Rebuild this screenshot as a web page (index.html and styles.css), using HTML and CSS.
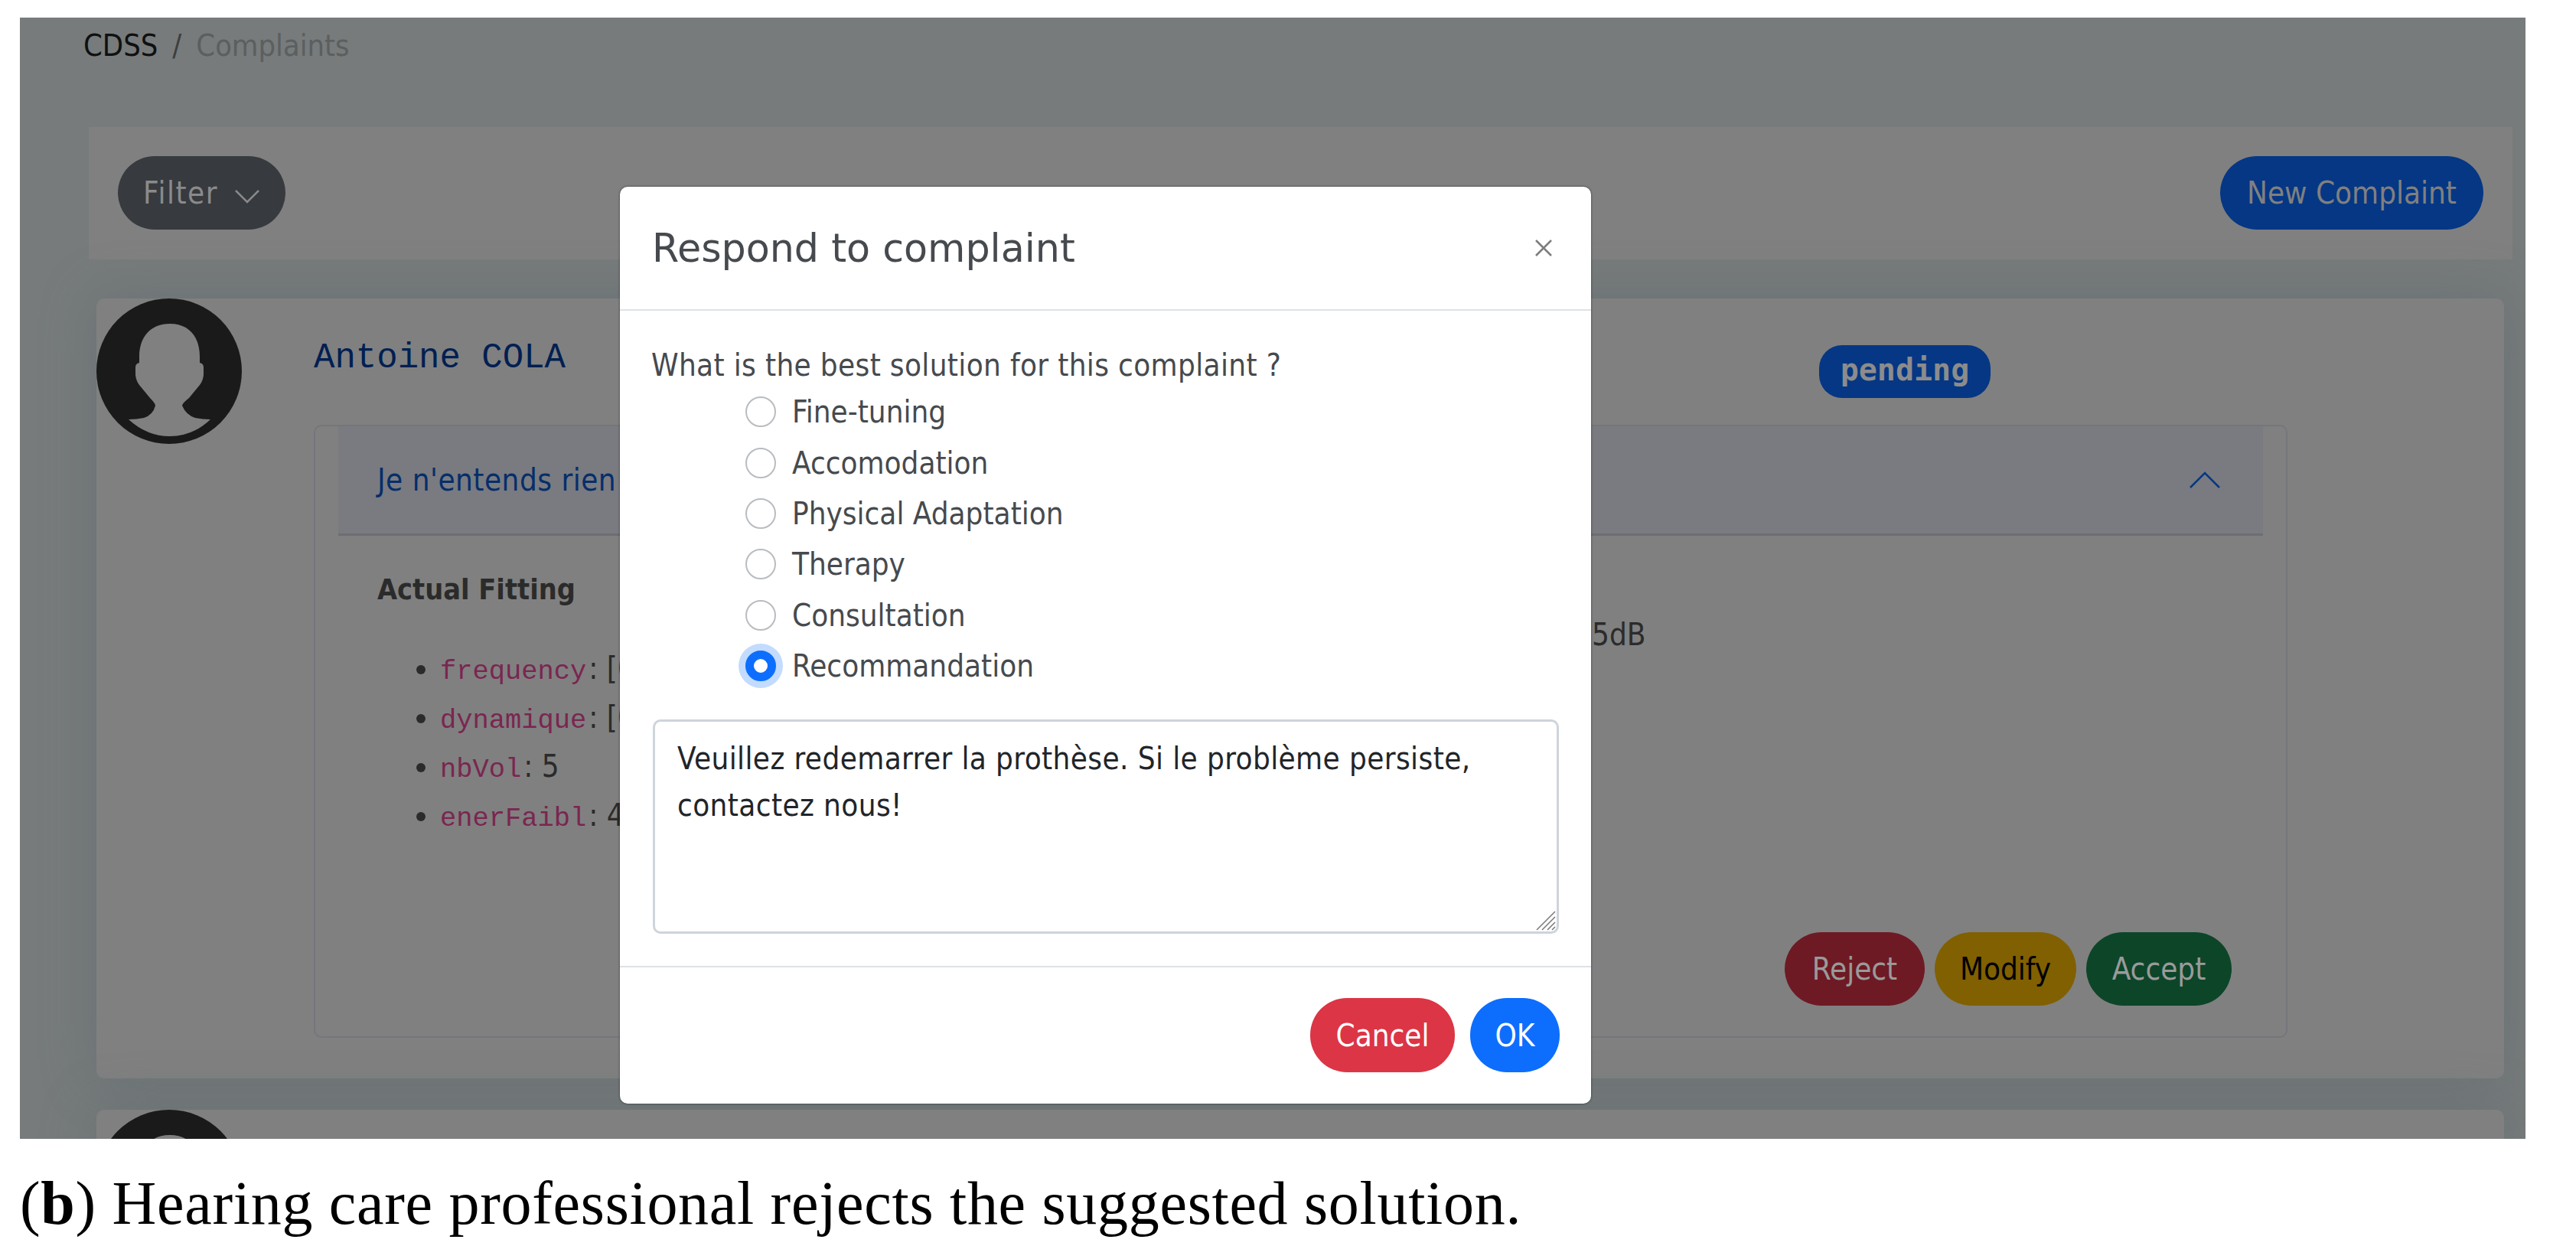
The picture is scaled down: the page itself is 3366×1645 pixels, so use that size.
FILE: index.html
```html
<!DOCTYPE html>
<html lang="en">
<head>
    <meta charset="UTF-8">
    <title>Complaints</title>
    <link rel="stylesheet" href="styles.css">
</head>
<body>
    <div class="shot">
        <nav class="crumbs"><span class="crumb-root">CDSS</span><span class="crumb-sep">/</span><span class="crumb-here">Complaints</span></nav>

        <div class="toolbar">
            <button class="btn btn-filter">Filter
                <svg class="chev-down" viewBox="0 0 34 20"><path d="M2 3 L17 18 L32 3"/></svg>
            </button>
            <button class="btn btn-new">New Complaint</button>
        </div>

        <div class="card">
            <svg class="avatar" viewBox="0 0 190 190">
                <circle cx="95" cy="95" r="95" fill="#1a1a1a"/>
                <path fill="#808080" d="M96 33C71 33 56 50 56 76L56 84Q51 85 51 90L51 100Q52 108 56 113L70 130Q77 137 77 140Q74 152 62 156Q52 158 42 158Q66 180 96 180Q126 180 149 158Q139 158 129 156Q117 152 112 140Q112 137 121 130L135 113Q139 108 140 100L140 90Q140 85 135 84L135 76C135 50 121 33 96 33Z"/>
            </svg>
            <div class="card-main">
                <div class="card-head">
                    <span class="patient">Antoine COLA</span>
                    <span class="status">pending</span>
                </div>
                <div class="complaint">
                    <div class="acc-head">
                        <span class="acc-title">Je n'entends rien</span>
                        <svg class="chev-up" viewBox="0 0 40 22"><path d="M1 21 L20 2 L39 21"/></svg>
                    </div>
                    <div class="acc-body">
                        <div class="fitting">
                            <h4>Actual Fitting</h4>
                            <ul>
                                <li><code>frequency</code>: [0]</li>
                                <li><code>dynamique</code>: [0]</li>
                                <li><code>nbVol</code>: 5</li>
                                <li><code>enerFaibl</code>: 4</li>
                            </ul>
                        </div>
                        <p class="suggestion">5dB</p>
                    </div>
                    <div class="actions">
                        <button class="btn btn-reject">Reject</button>
                        <button class="btn btn-modify">Modify</button>
                        <button class="btn btn-accept">Accept</button>
                    </div>
                </div>
            </div>
        </div>

        <div class="card card-next">
            <svg class="avatar" viewBox="0 0 190 190">
                <circle cx="95" cy="95" r="95" fill="#1a1a1a"/>
                <path fill="#808080" d="M96 33C71 33 56 50 56 76L56 84Q51 85 51 90L51 100Q52 108 56 113L70 130Q77 137 77 140L112 140Q112 137 121 130L135 113Q139 108 140 100L140 90Q140 85 135 84L135 76C135 50 121 33 96 33Z"/>
            </svg>
        </div>

        <div class="modal">
            <div class="modal-head">
                <h5>Respond to complaint</h5>
                <svg class="close" viewBox="0 0 24 22"><path d="M2 1 L22 21 M22 1 L2 21"/></svg>
            </div>
            <div class="modal-body">
                <p class="question">What is the best solution for this complaint ?</p>
                <div class="options">
                    <label class="option"><span class="radio"></span>Fine-tuning</label>
                    <label class="option"><span class="radio"></span>Accomodation</label>
                    <label class="option"><span class="radio"></span>Physical Adaptation</label>
                    <label class="option"><span class="radio"></span>Therapy</label>
                    <label class="option"><span class="radio"></span>Consultation</label>
                    <label class="option"><span class="radio radio-on"></span>Recommandation</label>
                </div>
                <div class="answer">Veuillez redemarrer la prothèse. Si le problème persiste, contactez nous!
                    <svg class="grip" viewBox="0 0 26 26"><path d="M25 1 L1 25 M25 8 L8 25 M25 15 L15 25 M25 21 L21 25"/></svg>
                </div>
            </div>
            <div class="modal-foot">
                <button class="btn btn-cancel">Cancel</button>
                <button class="btn btn-ok">OK</button>
            </div>
        </div>
    </div>
    <p class="caption">(<b>b</b>) Hearing care professional rejects the suggested solution.</p>
</body>
</html>
```

FILE: styles.css
```css
html, body {
    margin: 0;
    background: #ffffff;
}
body {
    width: 3366px;
    height: 1645px;
    overflow: hidden;
    padding: 23px 66px 0 26px;
    box-sizing: border-box;
    font-family: "DejaVu Sans", sans-serif;
    font-stretch: condensed;
    font-size: 40px;
}
.shot {
    position: relative;
    height: 1465px;
    overflow: hidden;
    background: #777b7b;
    padding: 18px 17px 0 83px;
    color: #2b2b2b;
    box-sizing: border-box;
}
.crumbs {
    height: 36px;
    line-height: 36px;
    display: flex;
    align-items: center;
    gap: 19px;
    margin-bottom: 89px;
    font-size: 39.5px;
}
.crumb-root { color: #101010; }
.crumb-sep { color: #3c3f40; }
.crumb-here { color: #5b5f60; }

.toolbar {
    margin-left: 7px;
    height: 173px;
    padding: 38px 38px 0;
    box-sizing: border-box;
    background: #808080;
    display: flex;
    justify-content: space-between;
    align-items: flex-start;
}
.btn {
    border: none;
    border-radius: 48px;
    height: 96px;
    font-family: inherit;
    font-stretch: inherit;
    font-size: 40px;
    color: #808080;
    padding: 0;
}
.btn-filter {
    width: 219px;
    background: #373a3f;
    color: #8a8a8a;
    letter-spacing: 1.5px;
}
.chev-down {
    width: 34px;
    height: 20px;
    margin-left: 8px;
    fill: none;
    stroke: #8a8a8a;
    stroke-width: 2.5;
}
.btn-new {
    width: 344px;
    background: #053784;
}

.card {
    margin: 51px 11px 0 17px;
    height: 1019px;
    background: #808080;
    border-radius: 10px;
    display: flex;
    box-shadow: 0 0 70px rgba(90, 105, 110, 0.45);
}
.avatar {
    width: 190px;
    height: 190px;
    flex: none;
}
.card-main {
    margin-left: 94px;
    width: 2579px;
}
.card-head {
    height: 165px;
    position: relative;
}
.patient {
    position: absolute;
    left: 0;
    top: 53px;
    font-family: "Liberation Mono", monospace;
    font-stretch: normal;
    font-size: 45.7px;
    line-height: 50px;
    color: #001f52;
}
.status {
    position: absolute;
    left: 1967px;
    top: 61px;
    width: 224px;
    height: 69px;
    line-height: 64px;
    text-align: center;
    border-radius: 30px;
    background: #053784;
    color: #8c8c8c;
    font-family: "DejaVu Sans Mono", monospace;
    font-stretch: normal;
    font-weight: bold;
    font-size: 40px;
}
.complaint {
    height: 801px;
    border: 2px solid #75767c;
    border-radius: 10px;
    box-sizing: border-box;
    padding: 0 30px;
    position: relative;
}
.acc-head {
    height: 143px;
    box-sizing: border-box;
    background: #797b80;
    border-bottom: 3px solid #6c6e74;
    padding: 0 56px 0 51px;
    display: flex;
    align-items: center;
    justify-content: space-between;
    color: #062e6b;
}
.acc-title {
    letter-spacing: 0.5px;
}
.chev-up {
    width: 40px;
    height: 22px;
    fill: none;
    stroke: #053784;
    stroke-width: 2.5;
}
.acc-body {
    padding: 48px 0 0 51px;
    display: flex;
}
.fitting {
    width: 1300px;
}
.fitting h4 {
    margin: 0 0 49px;
    font-size: 37.5px;
    line-height: 44px;
    font-weight: bold;
}
.fitting ul {
    margin: 0;
    padding: 0 0 0 82px;
}
.fitting li {
    height: 64px;
    line-height: 64px;
}
code {
    font-family: "Liberation Mono", monospace;
    font-stretch: normal;
    font-size: 35.4px;
    color: #7a2650;
    margin-right: 3px;
}
.suggestion {
    margin: 58px 0 0 287px;
}
.actions {
    position: absolute;
    right: 71px;
    bottom: 40px;
    display: flex;
    gap: 13px;
}
.btn-reject { width: 183px; background: #6e1a24; color: #9a9a9a; }
.btn-modify { width: 185px; background: #806000; color: #000000; }
.btn-accept { width: 190px; background: #0d4529; color: #9a9a9a; }

.card-next {
    margin-top: 41px;
    height: 200px;
}

/* sits over the dimmed page */
.modal {
    position: absolute;
    left: 784px;
    top: 221px;
    width: 1269px;
    height: 1198px;
    background: #ffffff;
    border-radius: 10px;
    box-shadow: 0 0 3px rgba(0, 0, 0, 0.6);
    color: #464a4e;
    overflow: hidden;
}
.modal-head {
    height: 160px;
    border-bottom: 2px solid #dee2e6;
    display: flex;
    align-items: center;
    justify-content: space-between;
    padding: 0 50px 0 42px;
}
.modal-head h5 {
    margin: 0;
    font-weight: normal;
    font-stretch: normal;
    font-size: 50.7px;
}
.close {
    width: 24px;
    height: 22px;
    fill: none;
    stroke: #7d7d7d;
    stroke-width: 2.5;
}
.modal-body {
    height: 858px;
    border-bottom: 2px solid #dee2e6;
    padding: 0 41px;
    box-sizing: border-box;
}
.question {
    margin: 0;
    height: 99px;
    padding-top: 48px;
    line-height: 46px;
    box-sizing: border-box;
    letter-spacing: 0.35px;
}
.options {
    padding-left: 123px;
    margin-bottom: 37px;
}
.option {
    height: 66.4px;
    display: flex;
    align-items: center;
    gap: 21px;
}
.radio {
    width: 40px;
    height: 40px;
    box-sizing: border-box;
    border: 2px solid #b9bcc0;
    border-radius: 50%;
    background: #ffffff;
}
.radio-on {
    border: 11px solid #0d6efd;
    box-shadow: 0 0 0 9px #c2dbfe;
}
.answer {
    position: relative;
    margin-left: 2px;
    width: 1184px;
    height: 280px;
    box-sizing: border-box;
    border: 3px solid #ced4da;
    border-radius: 10px;
    padding: 18px 100px 0 29px;
    line-height: 61px;
    letter-spacing: 0.4px;
    color: #212529;
    background: #ffffff;
}
.grip {
    position: absolute;
    right: 1px;
    bottom: 1px;
    width: 26px;
    height: 26px;
    fill: none;
    stroke: #777777;
    stroke-width: 1.5;
}
.modal-foot {
    display: flex;
    justify-content: flex-end;
    gap: 20px;
    padding: 40px 41px 0 0;
}
.btn-cancel { width: 189px; height: 97px; background: #dc3545; color: #ffffff; }
.btn-ok { width: 117px; height: 97px; background: #0d6efd; color: #ffffff; }

.caption {
    margin: 42px 0 0;
    font-family: "Liberation Serif", serif;
    font-stretch: normal;
    font-size: 80px;
    line-height: 84px;
    letter-spacing: 0.7px;
    color: #000000;
}
```
